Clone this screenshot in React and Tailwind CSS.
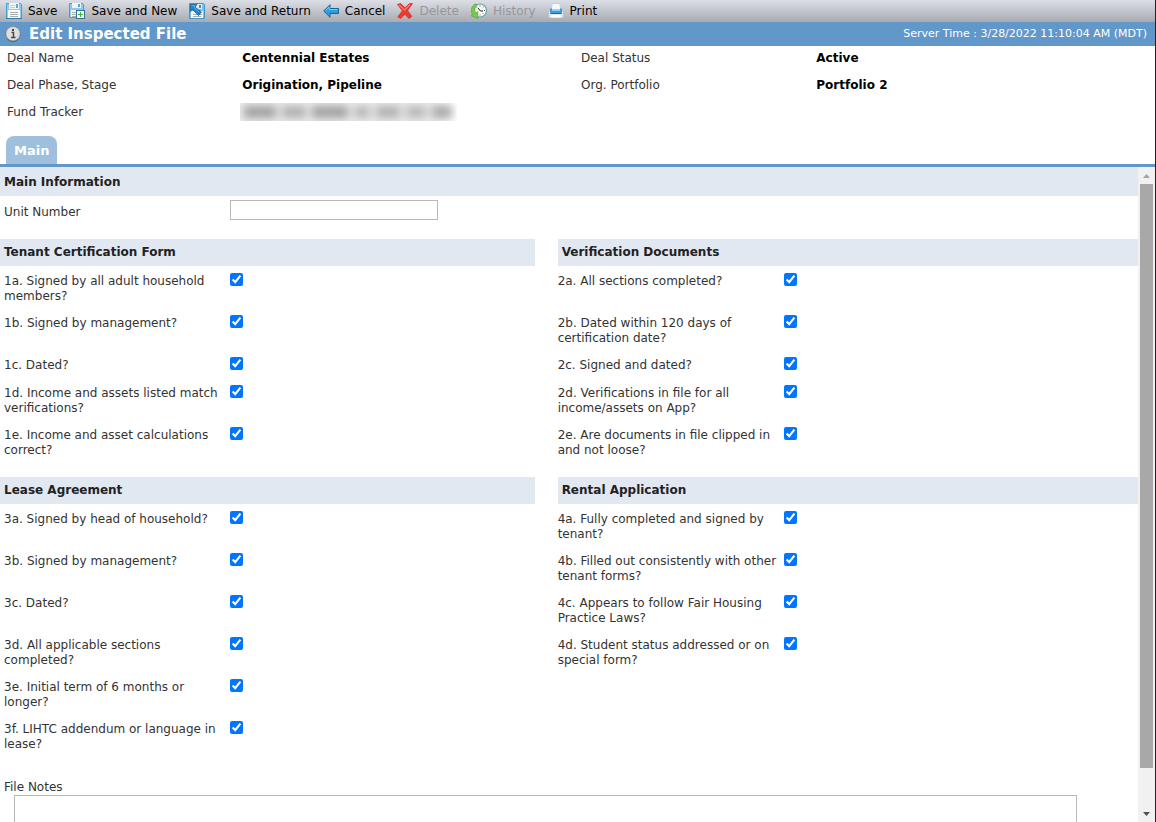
import { Fragment } from "react";

function SaveIcon() {
  return (
    <svg width="16" height="16" viewBox="0 0 16 16" aria-hidden="true">
      <path d="M0.500 0.500h14l1 1v14h-15z" fill="#8ccbee" stroke="#4a9fd0" />
      <rect x="3" y="0" width="10" height="6" fill="#eef5f9" />
      <path d="M4 2.500h5M4 4.500h5" stroke="#c3d3dd" />
      <rect x="10" y="1" width="2" height="4" fill="#6aa5c6" />
      <rect x="2" y="7" width="12" height="8" fill="#fafbfb" />
      <path d="M4 9.500h8M4 11.500h8M4 13.500h8" stroke="#a9adb0" />
      <path d="M0 15.500h16" stroke="#2e79ab" />
    </svg>
  );
}

function SaveNewIcon() {
  return (
    <svg width="16" height="16" viewBox="0 0 16 16" aria-hidden="true">
      <path d="M0.500 0.500h13l1 1v13h-14z" fill="#8ccbee" stroke="#4a9fd0" />
      <rect x="3" y="0" width="9" height="5" fill="#eef5f9" />
      <rect x="9" y="1" width="2" height="3" fill="#6aa5c6" />
      <rect x="2" y="7" width="11" height="7" fill="#fafbfb" />
      <path d="M3 9.500h5M3 11.500h5M3 13.500h5" stroke="#a9adb0" />
      <rect x="7.500" y="7.500" width="8" height="8" fill="#fff" stroke="#35719a" />
      <path d="M9 11.500h5M11.500 9v5" stroke="#3fae32" />
    </svg>
  );
}

function SaveReturnIcon() {
  return (
    <svg width="16" height="16" viewBox="0 0 16 16" aria-hidden="true">
      <path d="M0.500 0.500h14l1 1v14h-15z" fill="#7cc2ea" stroke="#3f94c8" />
      <rect x="6" y="1" width="7" height="5" fill="#dcebf4" />
      <rect x="10" y="2" width="2" height="3" fill="#5c86a0" />
      <rect x="2" y="8" width="12" height="7" fill="#f5f7f8" />
      <path d="M4 11.500h9M4 13.500h8" stroke="#a9adb0" />
      <path d="M1.500 1.500H8L6 4.200 12.500 9 9.500 12.500 3.800 6.800 1.500 8.500z" fill="#2183c8" stroke="#115a90" strokeWidth="0.700" />
      <path d="M2.500 2.500h3.500L5 4.500l5 4.500" fill="none" stroke="#58b4ea" />
    </svg>
  );
}

function CancelIcon() {
  return (
    <svg width="16" height="16" viewBox="0 0 16 16" aria-hidden="true">
      <path d="M0.700 8L7 1.700V5.500h8.500v5H7v3.800z" fill="#2d9de0" stroke="#14659a" strokeLinejoin="round" />
      <path d="M2.500 7.600L6.200 4v2.500h8.300" fill="none" stroke="#7fcbf4" />
    </svg>
  );
}

function DeleteIcon() {
  return (
    <svg width="16" height="16" viewBox="0 0 16 16" aria-hidden="true">
      <path
        d="M0.500 1.500L3.500 0.500 8 4.800l4.500-4.200h3L10.600 7.500l4.200 6-3 2L8 11 3.700 15.500 0.900 14l4.400-6.300z"
        fill="#f0382b"
        stroke="#cc271d"
        strokeWidth="0.700"
        strokeLinejoin="round"
      />
      <path d="M2 2l5.500 5L13 1.700" fill="none" stroke="#ff7d70" strokeWidth="1.200" />
    </svg>
  );
}

function HistoryIcon() {
  return (
    <svg width="16" height="16" viewBox="0 0 16 16" aria-hidden="true">
      <circle cx="9" cy="7.500" r="6.500" fill="#fbfbf8" stroke="#63a5b4" strokeWidth="1.200" />
      <path d="M9 2.500v1M14 7.500h-1M9 12.500v-1M12.500 4l-.7.700M12.500 11l-.7-.7M5.500 4l.7.700" stroke="#5f5f5f" />
      <path d="M7 5L9.500 8H12" fill="none" stroke="#222" />
      <path d="M5 0.800C0.800 2-1 7 1.300 11.300L0 12.700 6.700 15.500 7 8.700 4.700 10C3.500 7.500 3.500 4.500 6 2.500z" fill="#74cc4e" stroke="#46a530" strokeWidth="0.600" />
    </svg>
  );
}

function PrintIcon() {
  return (
    <svg width="16" height="16" viewBox="0 0 16 16" aria-hidden="true">
      <path d="M4 0.500h8l.5 6h-9z" fill="#f4f8fb" stroke="#c5d0da" />
      <path d="M0.500 9L2 7h12l1.500 2v5l-1 1h-13l-1-1z" fill="#dfe5eb" stroke="#aab5c0" strokeWidth="0.600" />
      <path d="M2 5.500h2V7h8V5.500h2V10l-1 1H3l-1-1z" fill="#3b9ddb" />
      <path d="M4 7.500h8" stroke="#8fcdf0" />
      <path d="M2.500 10.500h11" stroke="#1d6ea8" />
      <path d="M3.500 12h9l.5 2.500H3z" fill="#fff" />
    </svg>
  );
}

function InfoIcon() {
  return (
    <svg width="16" height="16" viewBox="0 0 16 16" aria-hidden="true">
      <circle cx="8" cy="8.500" r="7.500" fill="#47647f" />
      <circle cx="8" cy="7.700" r="7.200" fill="#dedede" stroke="#858585" strokeWidth="0.700" />
      <path d="M6.500 6.500h2v4.500M6 11.500h4.500" fill="none" stroke="#444" strokeWidth="1.400" />
      <rect x="7" y="3" width="2" height="2" fill="#444" />
    </svg>
  );
}

const actions = [
  { label: "Save", icon: SaveIcon },
  { label: "Save and New", icon: SaveNewIcon },
  { label: "Save and Return", icon: SaveReturnIcon },
  { label: "Cancel", icon: CancelIcon },
  { label: "Delete", icon: DeleteIcon, disabled: true },
  { label: "History", icon: HistoryIcon, disabled: true },
  { label: "Print", icon: PrintIcon },
];

// Each row holds the left and the right question, so both share one height
const sections = [
  {
    titles: ["Tenant Certification Form", "Verification Documents"],
    rows: [
      ["1a. Signed by all adult household members?", "2a. All sections completed?"],
      ["1b. Signed by management?", "2b. Dated within 120 days of certification date?"],
      ["1c. Dated?", "2c. Signed and dated?"],
      ["1d. Income and assets listed match verifications?", "2d. Verifications in file for all income/assets on App?"],
      ["1e. Income and asset calculations correct?", "2e. Are documents in file clipped in and not loose?"],
    ],
  },
  {
    titles: ["Lease Agreement", "Rental Application"],
    rows: [
      ["3a. Signed by head of household?", "4a. Fully completed and signed by tenant?"],
      ["3b. Signed by management?", "4b. Filled out consistently with other tenant forms?"],
      ["3c. Dated?", "4c. Appears to follow Fair Housing Practice Laws?"],
      ["3d. All applicable sections completed?", "4d. Student status addressed or on special form?"],
      ["3e. Initial term of 6 months or longer?", null],
      ["3f. LIHTC addendum or language in lease?", null],
    ],
  },
];

function Toolbar() {
  return (
    <div className="flex h-[22px] shrink-0 items-center bg-linear-to-b from-[#dddfe7] to-[#a9abb1]">
      {actions.map(({ label, icon: Icon, disabled }) => (
        <button
          key={label}
          type="button"
          disabled={disabled}
          className="flex items-center gap-1.5 px-1.5 whitespace-nowrap text-black disabled:text-[#96979b]"
        >
          <Icon />
          {label}
        </button>
      ))}
    </div>
  );
}

function Field({ label, children }) {
  return (
    <div className="flex h-[27px] w-1/2 items-start">
      <dt className="w-[41%] leading-6">{label}</dt>
      <dd className="leading-6 font-bold text-black">{children}</dd>
    </div>
  );
}

function Question({ text, className }) {
  if (!text) return <div />;
  const id = "q" + text.slice(0, 2);

  return (
    <div className="flex min-h-7 items-start pb-1">
      <label htmlFor={id} className={`mt-2 w-[230px] shrink-0 leading-[15px] ${className}`}>
        {text}
      </label>
      <input id={id} type="checkbox" defaultChecked className="mt-[7px] size-[13px] accent-[#0075ff]" />
    </div>
  );
}

function Section({ titles, rows }) {
  return (
    <section className="mb-[15px] grid grid-cols-[47%_51%] justify-between">
      {titles.map((title) => (
        <h2 key={title} className="bg-[#e1e8f2] pl-1 leading-[27px] font-bold text-[#222]">
          {title}
        </h2>
      ))}
      {rows.map(([left, right]) => (
        <Fragment key={left}>
          <Question text={left} className="pr-2 pl-1" />
          <Question text={right} className="max-w-[226px] pr-1" />
        </Fragment>
      ))}
    </section>
  );
}

function Scrollbar() {
  return (
    <div className="flex w-[17px] shrink-0 flex-col bg-[#f1f1f1]" aria-hidden="true">
      <div className="flex h-[17px] items-center justify-center">
        <svg width="7" height="4" viewBox="0 0 7 4">
          <path d="M0 4L3.500 0 7 4z" fill="#a3a3a3" />
        </svg>
      </div>
      <div className="flex-1 px-0.5">
        <div className="h-[94%] bg-[#a8a8a8]" />
      </div>
      <div className="flex h-[17px] items-center justify-center">
        <svg width="7" height="4" viewBox="0 0 7 4">
          <path d="M0 0h7L3.500 4z" fill="#505050" />
        </svg>
      </div>
    </div>
  );
}

function App() {
  return (
    <div className="flex h-screen flex-col border-r border-[#222] bg-white font-['DejaVu_Sans',Verdana,sans-serif] text-[12px] text-[#333]">
      <Toolbar />

      <header className="flex h-6 shrink-0 items-center bg-[#6297ca] pr-2 pl-[5px] text-white">
        <InfoIcon />
        <h1 className="ml-2 text-[15px] font-bold">Edit Inspected File</h1>
        <span className="ml-auto text-[11px]">Server Time : 3/28/2022 11:10:04 AM (MDT)</span>
      </header>

      <dl className="flex shrink-0 flex-wrap pl-[7px]">
        <Field label="Deal Name">Centennial Estates</Field>
        <Field label="Deal Status">Active</Field>
        <Field label="Deal Phase, Stage">Origination, Pipeline</Field>
        <Field label="Org. Portfolio">Portfolio 2</Field>
        <Field label="Fund Tracker">
          {/* hidden value */}
          <div className="mt-[3px] -ml-0.5 flex h-[18px] w-[217px] items-center overflow-hidden bg-linear-to-r from-[#ececec] from-90% to-white">
            <div className="flex gap-1.5 pl-1 blur-[4px]">
              <i className="h-3 w-8 bg-[#a0a0a0]" />
              <i className="h-3 w-6 bg-[#b0b0b0]" />
              <i className="h-3 w-9 bg-[#a0a0a0]" />
              <i className="h-3 w-4 bg-[#b8b8b8]" />
              <i className="h-3 w-6 bg-[#b0b0b0]" />
              <i className="h-3 w-5 bg-[#b8b8b8]" />
              <i className="h-3 w-5 bg-[#a8a8a8]" />
            </div>
          </div>
        </Field>
      </dl>

      <nav className="flex shrink-0 border-b-[3px] border-[#6297ca] pt-[9px] pl-1.5">
        <button type="button" className="h-7 rounded-t-lg bg-[#9fbfdf] px-2 pt-0.5 text-[13px] font-bold text-white">
          Main
        </button>
      </nav>

      <div className="flex min-h-0 flex-1">
        <main className="flex-1 overflow-y-auto [scrollbar-width:none]">
          <h2 className="bg-[#e1e8f2] pt-0.5 pl-1 leading-[27px] font-bold text-[#222]">Main Information</h2>
          <div className="mb-[15px] flex pt-1 pl-1">
            <label htmlFor="unit" className="w-[226px] leading-6">
              Unit Number
            </label>
            <input id="unit" type="text" className="h-5 w-[208px] border border-[#b9b9b9] px-1 outline-none" />
          </div>

          {sections.map((section) => (
            <Section key={section.titles[0]} {...section} />
          ))}

          <label htmlFor="notes" className="block pt-2 pl-1 leading-4">
            File Notes
          </label>
          <textarea id="notes" rows="5" className="ml-3.5 block w-[calc(94%-7px)] resize-none border border-[#b9b9b9] p-1 outline-none" />
        </main>
        <Scrollbar />
      </div>
    </div>
  );
}

export default App;
